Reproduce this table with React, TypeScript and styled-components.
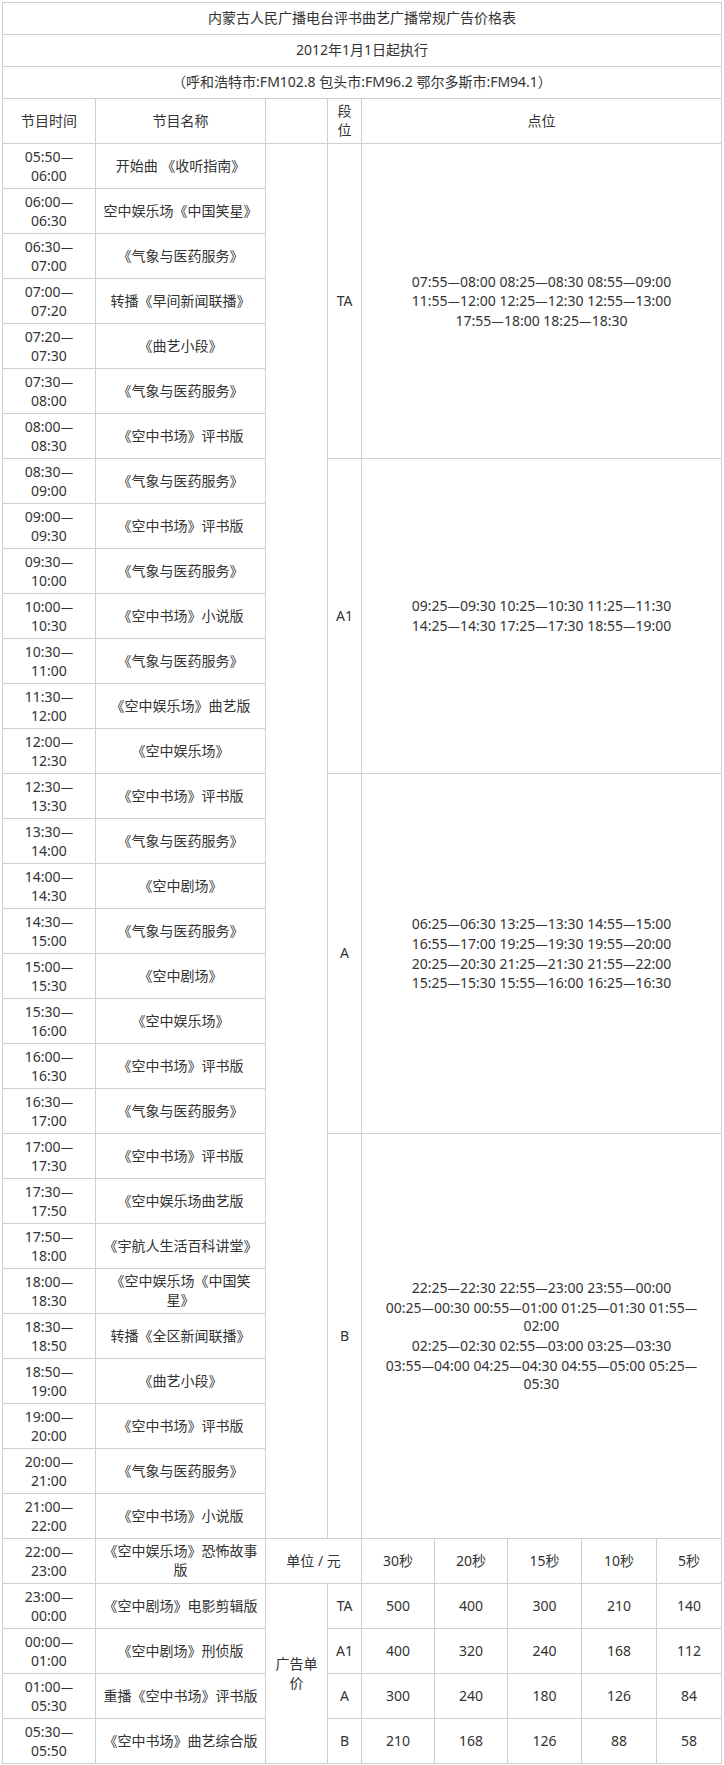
import React from 'react';
import styled, { createGlobalStyle } from 'styled-components';

type Program = { start: string; end: string; name: string };

const programs: Program[] = [
  { start: '05:50', end: '06:00', name: '开始曲 《收听指南》' },
  { start: '06:00', end: '06:30', name: '空中娱乐场《中国笑星》' },
  { start: '06:30', end: '07:00', name: '《气象与医药服务》' },
  { start: '07:00', end: '07:20', name: '转播《早间新闻联播》' },
  { start: '07:20', end: '07:30', name: '《曲艺小段》' },
  { start: '07:30', end: '08:00', name: '《气象与医药服务》' },
  { start: '08:00', end: '08:30', name: '《空中书场》评书版' },
  { start: '08:30', end: '09:00', name: '《气象与医药服务》' },
  { start: '09:00', end: '09:30', name: '《空中书场》评书版' },
  { start: '09:30', end: '10:00', name: '《气象与医药服务》' },
  { start: '10:00', end: '10:30', name: '《空中书场》小说版' },
  { start: '10:30', end: '11:00', name: '《气象与医药服务》' },
  { start: '11:30', end: '12:00', name: '《空中娱乐场》曲艺版' },
  { start: '12:00', end: '12:30', name: '《空中娱乐场》' },
  { start: '12:30', end: '13:30', name: '《空中书场》评书版' },
  { start: '13:30', end: '14:00', name: '《气象与医药服务》' },
  { start: '14:00', end: '14:30', name: '《空中剧场》' },
  { start: '14:30', end: '15:00', name: '《气象与医药服务》' },
  { start: '15:00', end: '15:30', name: '《空中剧场》' },
  { start: '15:30', end: '16:00', name: '《空中娱乐场》' },
  { start: '16:00', end: '16:30', name: '《空中书场》评书版' },
  { start: '16:30', end: '17:00', name: '《气象与医药服务》' },
  { start: '17:00', end: '17:30', name: '《空中书场》评书版' },
  { start: '17:30', end: '17:50', name: '《空中娱乐场曲艺版' },
  { start: '17:50', end: '18:00', name: '《宇航人生活百科讲堂》' },
  { start: '18:00', end: '18:30', name: '《空中娱乐场《中国笑星》' },
  { start: '18:30', end: '18:50', name: '转播《全区新闻联播》' },
  { start: '18:50', end: '19:00', name: '《曲艺小段》' },
  { start: '19:00', end: '20:00', name: '《空中书场》评书版' },
  { start: '20:00', end: '21:00', name: '《气象与医药服务》' },
  { start: '21:00', end: '22:00', name: '《空中书场》小说版' },
  { start: '22:00', end: '23:00', name: '《空中娱乐场》恐怖故事版' },
  { start: '23:00', end: '00:00', name: '《空中剧场》电影剪辑版' },
  { start: '00:00', end: '01:00', name: '《空中剧场》刑侦版' },
  { start: '01:00', end: '05:30', name: '重播《空中书场》评书版' },
  { start: '05:30', end: '05:50', name: '《空中书场》曲艺综合版' },
];

// segment blocks: program row they start on, how many rows they cover, their slots
const segments: { at: number; rows: number; label: string; slots: string[] }[] = [
  {
    at: 0,
    rows: 7,
    label: 'TA',
    slots: [
      '07:55—08:00 08:25—08:30 08:55—09:00',
      '11:55—12:00 12:25—12:30 12:55—13:00',
      '17:55—18:00 18:25—18:30',
    ],
  },
  {
    at: 7,
    rows: 7,
    label: 'A1',
    slots: ['09:25—09:30 10:25—10:30 11:25—11:30', '14:25—14:30 17:25—17:30 18:55—19:00'],
  },
  {
    at: 14,
    rows: 8,
    label: 'A',
    slots: [
      '06:25—06:30 13:25—13:30 14:55—15:00',
      '16:55—17:00 19:25—19:30 19:55—20:00',
      '20:25—20:30 21:25—21:30 21:55—22:00',
      '15:25—15:30 15:55—16:00 16:25—16:30',
    ],
  },
  {
    at: 22,
    rows: 9,
    label: 'B',
    slots: [
      '22:25—22:30 22:55—23:00 23:55—00:00',
      '00:25—00:30 00:55—01:00 01:25—01:30 01:55—',
      '02:00',
      '02:25—02:30 02:55—03:00 03:25—03:30',
      '03:55—04:00 04:25—04:30 04:55—05:00 05:25—',
      '05:30',
    ],
  },
];

const durations = ['30秒', '20秒', '15秒', '10秒', '5秒'];

const prices: { label: string; values: number[] }[] = [
  { label: 'TA', values: [500, 400, 300, 210, 140] },
  { label: 'A1', values: [400, 320, 240, 168, 112] },
  { label: 'A', values: [300, 240, 180, 126, 84] },
  { label: 'B', values: [210, 168, 126, 88, 58] },
];

const PRICE_START = 31; // program row holding the "单位 / 元" header

// em dashes come from the CJK font so they are a full em wide
const withDashes = (text: string) => {
  const parts = text.split('—');
  return parts.map((part, i) => (
    <React.Fragment key={i}>
      {part}
      {i < parts.length - 1 && <Dash>—</Dash>}
    </React.Fragment>
  ));
};

const App = () => {
  const rows: React.ReactNode[] = [];

  programs.forEach((p, i) => {
    rows.push(
      <Cell key={`t${i}`}>
        <Line>{withDashes(`${p.start}—`)}</Line>
        <Line>{p.end}</Line>
      </Cell>,
    );
    rows.push(<Cell key={`n${i}`}>{p.name}</Cell>);

    if (i === 0) rows.push(<Cell key="blank" $rows={31} />);

    const seg = segments.find((s) => s.at === i);
    if (seg) {
      rows.push(
        <Cell key={`s${i}`} $rows={seg.rows}>
          {seg.label}
        </Cell>,
      );
      rows.push(
        <Cell key={`p${i}`} $rows={seg.rows} $cols={5}>
          {seg.slots.map((line) => (
            <Line key={line}>{withDashes(line)}</Line>
          ))}
        </Cell>,
      );
    }

    if (i === PRICE_START) {
      rows.push(
        <Cell key="unit" $cols={2}>
          单位 / 元
        </Cell>,
      );
      durations.forEach((d) => rows.push(<Cell key={d}>{d}</Cell>));
    }

    const priceIndex = i - PRICE_START - 1;
    if (priceIndex >= 0 && priceIndex < prices.length) {
      if (priceIndex === 0) {
        rows.push(
          <Cell key="unitprice" $rows={4}>
            广告单价
          </Cell>,
        );
      }
      const pr = prices[priceIndex];
      rows.push(<Cell key={`pl${pr.label}`}>{pr.label}</Cell>);
      pr.values.forEach((v, k) => rows.push(<Cell key={`pv${pr.label}${k}`}>{v}</Cell>));
    }
  });

  return (
    <>
      <GlobalStyle />
      <PriceGrid>
        <TitleCell>内蒙古人民广播电台评书曲艺广播常规广告价格表</TitleCell>
        <TitleCell>2012年1月1日起执行</TitleCell>
        <TitleCell>（呼和浩特市:FM102.8 包头市:FM96.2 鄂尔多斯市:FM94.1）</TitleCell>

        <Cell>节目时间</Cell>
        <Cell>节目名称</Cell>
        <Cell />
        <Cell>
          <Line>段</Line>
          <Line>位</Line>
        </Cell>
        <Cell $cols={5}>点位</Cell>

        {rows}
      </PriceGrid>
    </>
  );
};

export default App;

const GlobalStyle = createGlobalStyle`
  html, body {
    margin: 0;
    padding: 0;
    background: #fff;
  }
  body {
    font-family: "Noto Sans", "Noto Sans CJK SC", sans-serif;
    font-size: 14px;
    color: #333;
  }
`;

const PriceGrid = styled.div`
  display: grid;
  grid-template-columns: 92px 169px 61px 33px 72px 72px 73px 74px 64px;
  grid-template-rows: 31px 31px 31px 44px repeat(36, 44px);
  gap: 1px;
  width: max-content;
  margin: 2px;
  border: 1px solid #cfcfcf;
  background: #cfcfcf;
`;

const Cell = styled.div<{ $rows?: number; $cols?: number }>`
  grid-row: span ${(p) => p.$rows ?? 1};
  grid-column: span ${(p) => p.$cols ?? 1};
  display: flex;
  flex-direction: column;
  align-items: center;
  justify-content: center;
  padding: 0 6px;
  background: #fff;
  text-align: center;
  line-height: 18.6px;
  color: #333;
`;

const TitleCell = styled(Cell)`
  grid-column: 1 / -1;
`;

const Line = styled.span`
  display: block;
  white-space: nowrap;
`;

const Dash = styled.span`
  font-family: "Noto Sans CJK SC", sans-serif;
`;
